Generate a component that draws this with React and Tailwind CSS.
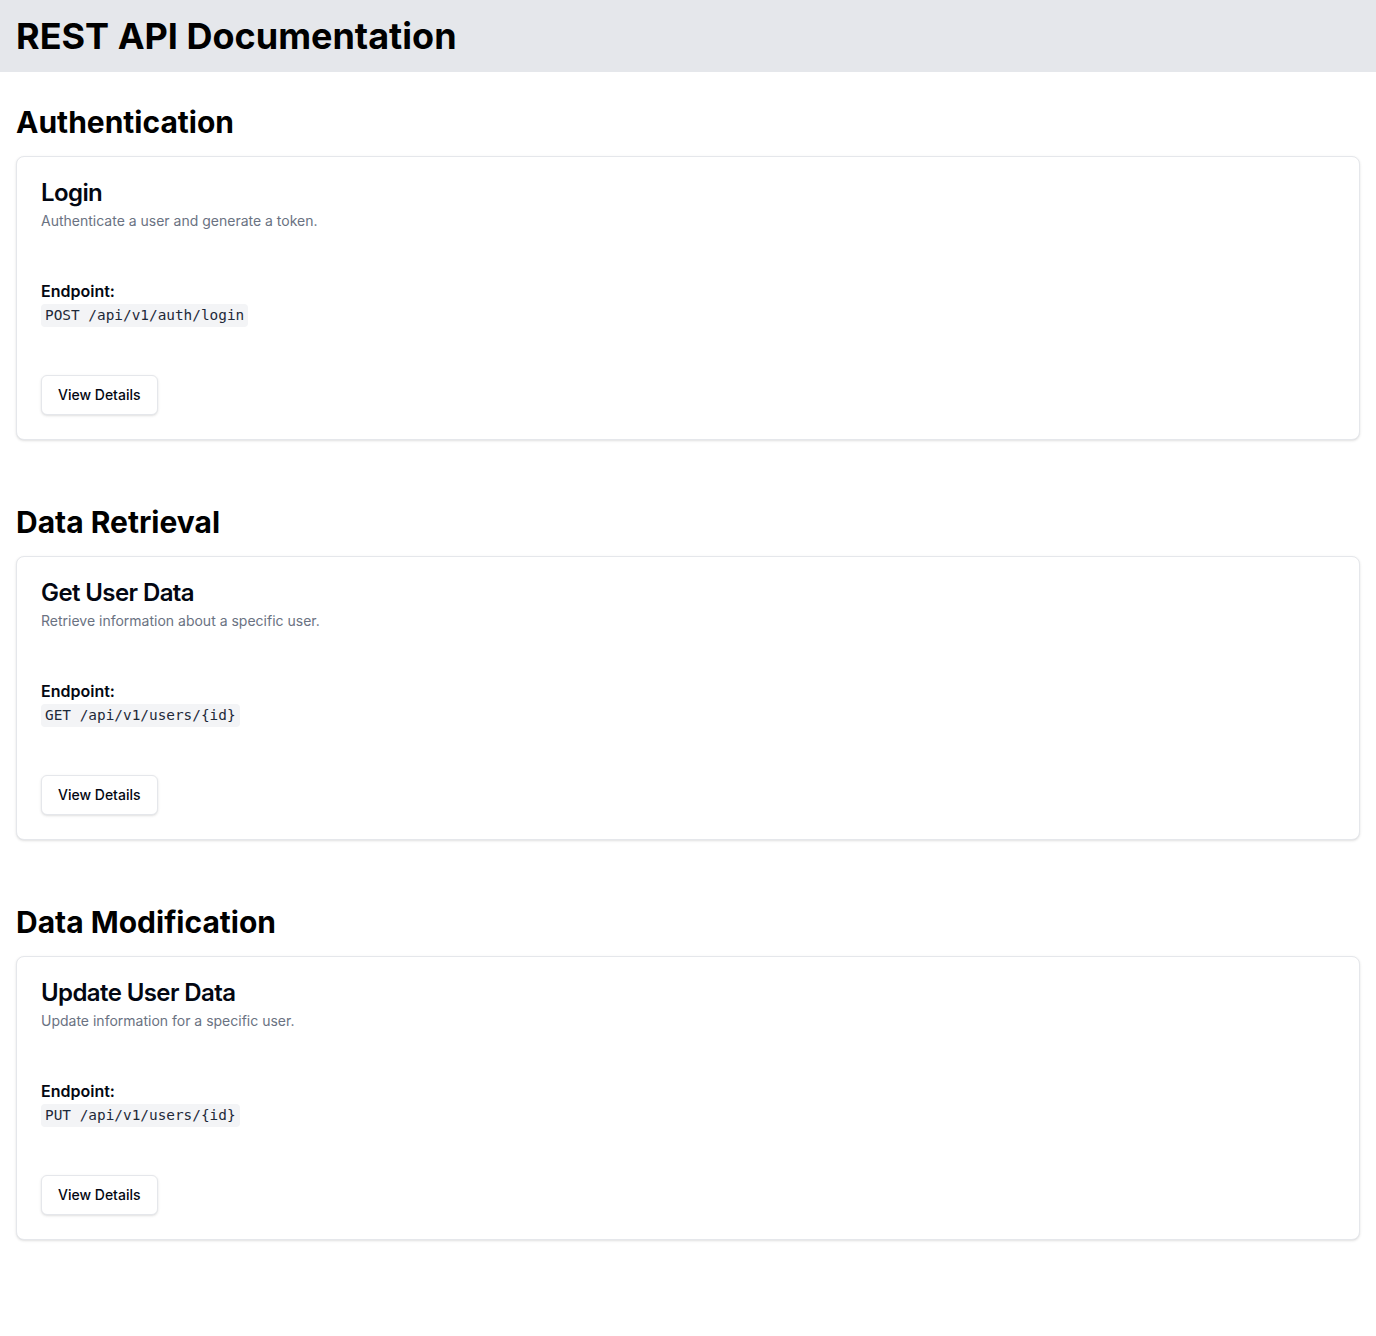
import React from 'react';

const SECTIONS = [
  {
    title: 'Authentication',
    name: 'Login',
    description: 'Authenticate a user and generate a token.',
    endpoint: 'POST /api/v1/auth/login',
  },
  {
    title: 'Data Retrieval',
    name: 'Get User Data',
    description: 'Retrieve information about a specific user.',
    endpoint: 'GET /api/v1/users/{id}',
  },
  {
    title: 'Data Modification',
    name: 'Update User Data',
    description: 'Update information for a specific user.',
    endpoint: 'PUT /api/v1/users/{id}',
  },
];

function EndpointCard({ name, description, endpoint }) {
  return (
    <div className="rounded-lg border border-gray-200 bg-white shadow-sm">
      <div className="flex flex-col gap-1.5 p-6">
        <h3 className="text-2xl font-semibold leading-none tracking-tight text-gray-950">{name}</h3>
        <p className="text-sm text-gray-500">{description}</p>
      </div>
      <div className="px-6 pb-6">
        <div className="py-6">
          <p className="text-base font-semibold text-gray-950">Endpoint:</p>
          <div className="flex pt-px">
            <code className="rounded-sm bg-gray-100 px-1 py-0.5 text-[14.4px] leading-[19px] text-gray-800 font-['DejaVu_Sans_Mono',monospace]">
              {endpoint}
            </code>
          </div>
        </div>
      </div>
      <div className="flex items-center px-6 pb-6">
        <button className="h-10 rounded-md border border-gray-200 bg-white px-4 py-2 text-sm font-medium text-gray-950 shadow-sm">
          View Details
        </button>
      </div>
    </div>
  );
}

export default function App() {
  return (
    <div className="min-h-screen bg-white font-['Inter',sans-serif] text-gray-950">
      <header className="bg-gray-200 p-4">
        <h1 className="text-4xl font-bold text-black">REST API Documentation</h1>
      </header>
      <main className="flex flex-col gap-8 p-4">
        {SECTIONS.map((s) => (
          <section key={s.title} className="py-4">
            <h2 className="mb-4 text-3xl font-bold text-black">{s.title}</h2>
            <EndpointCard name={s.name} description={s.description} endpoint={s.endpoint} />
          </section>
        ))}
      </main>
    </div>
  );
}
